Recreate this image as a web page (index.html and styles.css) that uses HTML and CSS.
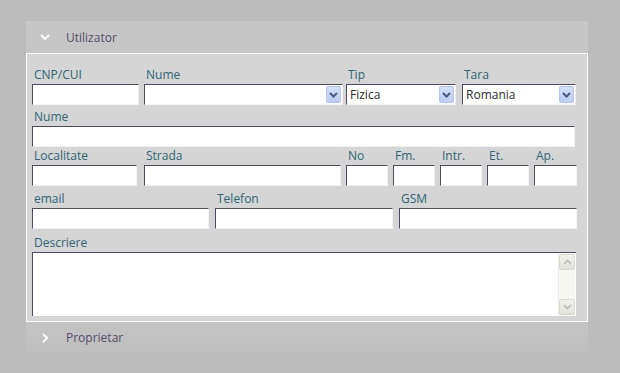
FILE: index.html
```html
<!DOCTYPE html>
<html>
	<head>
		<meta charset="UTF-8">
		<title>Utilizator</title>
		<link rel="stylesheet" href="styles.css">
	</head>
	<body>
		<div class="accordion">
			<div class="acc-head">
				<span class="chev"><svg width="10" height="6" viewBox="0 0 10 6"><polyline points="1,1 5,5 9,1" fill="none" stroke="#fff" stroke-width="2"/></svg></span>
				<span class="acc-title">Utilizator</span>
			</div>
			<div class="acc-body">
				<div class="row r1">
					<div class="field w-cnp"><label>CNP/CUI</label><input type="text"></div>
					<div class="field w-nume">
						<label>Nume</label>
						<div class="select">
							<select><option></option></select>
							<span class="drop"><svg width="9" height="6" viewBox="0 0 9 6"><polyline points="1,1 4.5,4.5 8,1" fill="none" stroke="#4a5b82" stroke-width="2"/></svg></span>
						</div>
					</div>
					<div class="field w-tip">
						<label>Tip</label>
						<div class="select">
							<select><option>Fizica</option></select>
							<span class="drop"><svg width="9" height="6" viewBox="0 0 9 6"><polyline points="1,1 4.5,4.5 8,1" fill="none" stroke="#4a5b82" stroke-width="2"/></svg></span>
						</div>
					</div>
					<div class="field w-tara">
						<label>Tara</label>
						<div class="select">
							<select><option>Romania</option></select>
							<span class="drop"><svg width="9" height="6" viewBox="0 0 9 6"><polyline points="1,1 4.5,4.5 8,1" fill="none" stroke="#4a5b82" stroke-width="2"/></svg></span>
						</div>
					</div>
				</div>
				<div class="row r2">
					<div class="field w-full"><label>Nume</label><input type="text"></div>
				</div>
				<div class="row r3">
					<div class="field w-loc"><label>Localitate</label><input type="text"></div>
					<div class="field w-str"><label>Strada</label><input type="text"></div>
					<div class="field w-nr"><label>No</label><input type="text"></div>
					<div class="field w-nr"><label>Fm.</label><input type="text"></div>
					<div class="field w-nr"><label>Intr.</label><input type="text"></div>
					<div class="field w-nr"><label>Et.</label><input type="text"></div>
					<div class="field w-ap"><label>Ap.</label><input type="text"></div>
				</div>
				<div class="row r4">
					<div class="field w-mail"><label>email</label><input type="text"></div>
					<div class="field w-tel"><label>Telefon</label><input type="text"></div>
					<div class="field w-gsm"><label>GSM</label><input type="text"></div>
				</div>
				<div class="row r5">
					<div class="field w-desc">
						<label>Descriere</label>
						<div class="memo">
							<textarea></textarea>
							<div class="vscroll">
								<span class="sb-btn"><svg width="9" height="6" viewBox="0 0 9 6"><polyline points="1,5 4.5,1.5 8,5" fill="none" stroke="#b9b9b0" stroke-width="1.6"/></svg></span>
								<span class="sb-btn"><svg width="9" height="6" viewBox="0 0 9 6"><polyline points="1,1 4.5,4.5 8,1" fill="none" stroke="#b9b9b0" stroke-width="1.6"/></svg></span>
							</div>
						</div>
					</div>
				</div>
			</div>
			<div class="acc-head closed">
				<span class="chev"><svg width="6" height="10" viewBox="0 0 6 10"><polyline points="1,1 5,5 1,9" fill="none" stroke="#fff" stroke-width="2"/></svg></span>
				<span class="acc-title">Proprietar</span>
			</div>
		</div>
	</body>
</html>
```
FILE: styles.css
```css
*{
	margin: 0;
	padding: 0;
	box-sizing: border-box;
}
body{
	background: #bcbcbc;
	font-family: "Open Sans", "Noto Sans", sans-serif;
	font-size: 12px;
}
.accordion{
	width: 562px;
	margin: 21px 0 0 26px;
}
.acc-head{
	height: 32px;
	display: flex;
	align-items: center;
	padding-left: 14px;
	background: #c6c6c6;
	color: #564c6b;
}
.acc-head.closed{
	height: 31px;
	background: linear-gradient(#c4c4c4, #bebebe);
}
.acc-head .chev{
	width: 10px;
	margin-right: 16px;
	display: flex;
	align-items: center;
	justify-content: center;
}
.acc-body{
	background: #d5d5d5;
	border: 1px solid #fff;
	padding: 12px 10px 5px 5px;
}
.row{
	display: flex;
}
.r2{
	margin-top: 3px;
}
.r4{
	margin-top: 4px;
}
.r5{
	margin-top: 5px;
}
.field label{
	display: block;
	height: 18px;
	padding: 1px 0 0 2px;
	line-height: 16px;
	color: #2b6776;
	white-space: nowrap;
}
.field input,
.field select{
	display: block;
	width: 100%;
	height: 21px;
	border: 1px solid;
	border-color: #4f4a66 #f2f2f2 #f2f2f2 #4f4a66;
	background: #fff;
	font-family: inherit;
	font-size: 12px;
	color: #2c2c2c;
	outline: none;
}
.select{
	position: relative;
}
.select select{
	appearance: none;
	-webkit-appearance: none;
	padding: 0 18px 0 3px;
	border-radius: 0;
}
.select .drop{
	position: absolute;
	top: 2px;
	right: 2px;
	width: 15px;
	height: 17px;
	background: linear-gradient(#d3e0fb, #bccdf4);
	border: 1px solid #b3c5ee;
	border-radius: 2px;
	display: flex;
	align-items: center;
	justify-content: center;
}
.w-cnp{ width: 107px; margin-right: 5px; }
.w-nume{ width: 199px; margin-right: 3px; }
.w-tip{ width: 110px; margin-right: 6px; }
.w-tara{ width: 114px; }
.w-full{ width: 543px; }
.w-loc{ width: 105px; margin-right: 7px; }
.w-str{ width: 197px; margin-right: 5px; }
.w-nr{ width: 42px; margin-right: 5px; }
.w-ap{ width: 43px; }
.w-mail{ width: 177px; margin-right: 6px; }
.w-tel{ width: 178px; margin-right: 6px; }
.w-gsm{ width: 178px; }
.w-desc{ width: 544px; }
.memo{
	display: flex;
	height: 64px;
	background: #fff;
	border-top: 1px solid #4f4a66;
	border-left: 1px solid #4f4a66;
}
.memo textarea{
	flex: 1;
	border: 0;
	resize: none;
	outline: none;
	overflow: hidden;
}
.vscroll{
	width: 17px;
	margin-right: 1px;
	background: #f7f7f1;
	border-left: 1px solid #ecece6;
	display: flex;
	flex-direction: column;
	justify-content: space-between;
	padding: 1px 0;
}
.sb-btn{
	height: 16px;
	background: linear-gradient(#f1f1ec, #e4e4dc);
	border: 1px solid #dadad2;
	border-radius: 2px;
	display: flex;
	align-items: center;
	justify-content: center;
}
```
